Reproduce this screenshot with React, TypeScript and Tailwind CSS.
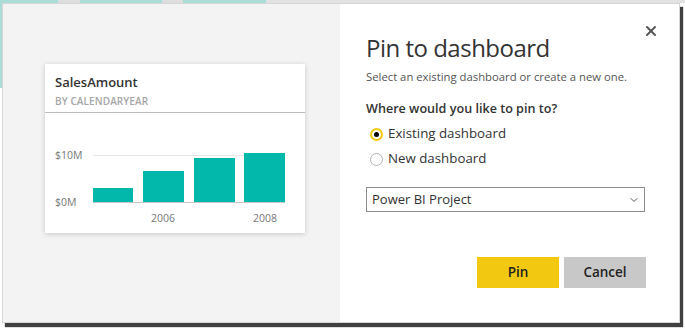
import { X, ChevronDown } from "lucide-react";

const bars = [
  { x: 48, y: 75, w: 40, h: 14 },
  { x: 98, y: 58, w: 41, h: 31 },
  { x: 149, y: 45, w: 41, h: 44 },
  { x: 199, y: 40, w: 41, h: 49 },
];

function Chart() {
  return (
    <svg width="258" height="118" className="block" style={{ fontFamily: "'Open Sans', sans-serif" }}>
      <line x1="48" x2="240" y1="42.5" y2="42.5" stroke="#e6e6e6" />
      {bars.map((b, i) => (
        <rect key={i} x={b.x} y={b.y} width={b.w} height={b.h} fill="#01b8aa" />
      ))}
      <line x1="48" x2="240" y1="89.5" y2="89.5" stroke="#c6c6c6" />
      <text x="10" y="46" fontSize="10.5" fill="#777">$10M</text>
      <text x="10" y="93" fontSize="10.5" fill="#777">$0M</text>
      <text x="118" y="109" fontSize="10.5" fill="#777" textAnchor="middle">2006</text>
      <text x="220" y="109" fontSize="10.5" fill="#777" textAnchor="middle">2008</text>
    </svg>
  );
}

function Radio({ checked, label }: { checked?: boolean; label: string }) {
  return (
    <div className="flex items-center h-[20px] pl-[4px] gap-[5px]">
      {checked ? (
        <span className="w-[13px] h-[13px] rounded-full border-2 border-[#f2c811] flex items-center justify-center">
          <span className="w-[5px] h-[5px] rounded-full bg-black" />
        </span>
      ) : (
        <span className="w-[13px] h-[13px] rounded-full border border-[#b4b4b4]" />
      )}
      <span className="text-[13.3px] text-[#333]">{label}</span>
    </div>
  );
}

export default function App() {
  return (
    <div className="relative w-[685px] h-[331px] bg-white overflow-hidden" style={{ fontFamily: "'Open Sans', sans-serif" }}>
      {/* strip of the page behind the dialog */}
      <div className="flex h-[3px]">
        <div className="w-[58px] bg-[#a9ddd6]" />
        <div className="w-[22px] bg-[#dedede]" />
        <div className="w-[82px] bg-[#a9ddd6]" />
        <div className="w-[21px] bg-[#dedede]" />
        <div className="w-[83px] bg-[#a9ddd6]" />
        <div className="flex-1 bg-[#e2e2e2]" />
      </div>
      <div className="absolute left-0 top-0 w-[2px] h-[88px] bg-[#a9ddd6]" />

      <div className="ml-[2px] w-[678px] h-[320px] border border-[#d6d6d6] flex shadow-[3px_4px_1px_rgba(0,0,0,0.75)]">
        {/* left: tile preview */}
        <div className="w-[337px] bg-[#f3f3f3] pl-[42px] pt-[60px]">
          <div className="w-[260px] h-[169px] bg-white shadow-[0_1px_5px_rgba(0,0,0,0.18)]">
            <div className="h-[49px] border-b border-[#bcbcbc] pl-[10px] pt-[9px]">
              <div className="text-[13px] font-semibold text-[#333] leading-[18px]">SalesAmount</div>
              <div className="text-[10px] font-semibold text-[#a6a6a6] leading-[14px] mt-[3px] tracking-[0.1px]">BY CALENDARYEAR</div>
            </div>
            <Chart />
          </div>
        </div>

        {/* right: form */}
        <div className="relative flex-1 bg-white pl-[26px] pr-[33px] pt-[29px]">
          <button className="absolute right-[20px] top-[19px] text-[#555]">
            <X size={16} strokeWidth={3} />
          </button>
          <div className="text-[24px] leading-[30px] tracking-[-0.5px] text-[#333]">Pin to dashboard</div>
          <div className="mt-[6px] text-[11.3px] leading-[16px] text-[#555]">Select an existing dashboard or create a new one.</div>
          <div className="mt-[14px] text-[12.6px] leading-[20px] font-semibold text-[#333]">Where would you like to pin to?</div>
          <div className="mt-[5px] flex flex-col gap-[5px]">
            <Radio checked label="Existing dashboard" />
            <Radio label="New dashboard" />
          </div>
          <div className="mt-[18px] w-[279px] h-[25px] border border-[#8c8c8c] flex items-center justify-between pl-[5px] pr-[4px]">
            <span className="text-[13px] text-[#333]">Power BI Project</span>
            <ChevronDown size={12} className="text-[#555]" />
          </div>
          <div className="mt-[45px] flex justify-end gap-[5px]">
            <button className="w-[82px] h-[31px] bg-[#f2c811] text-[13.5px] font-semibold text-[#222]">Pin</button>
            <button className="w-[82px] h-[31px] bg-[#c8c8c8] text-[13.5px] font-semibold text-[#222]">Cancel</button>
          </div>
        </div>
      </div>
    </div>
  );
}
